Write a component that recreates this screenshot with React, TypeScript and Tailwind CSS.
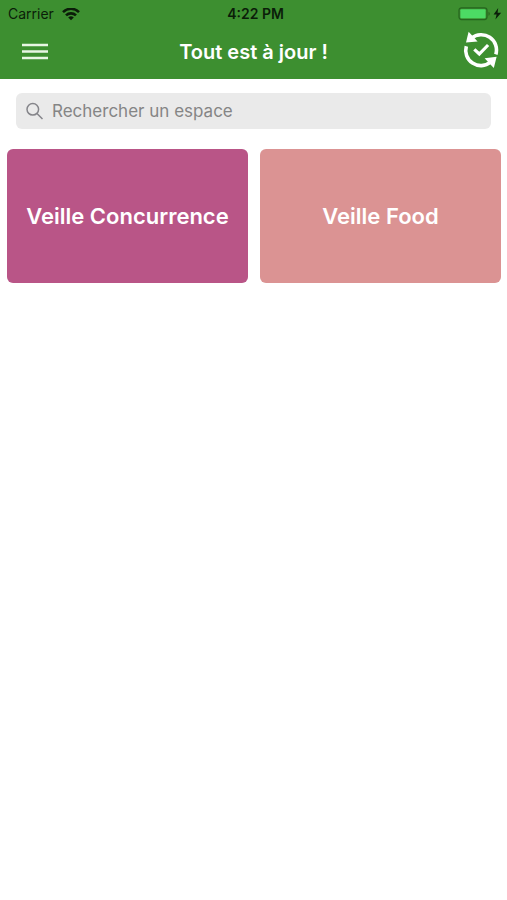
import { useState } from 'react'

const spaces = [
  { name: 'Veille Concurrence', color: 'bg-[#b95587]' },
  { name: 'Veille Food', color: 'bg-[#db9393]' },
]

function WifiIcon() {
  return (
    <svg viewBox="0 0 18 13" className="w-[18px] h-[13px]" fill="none" stroke="#0b1d09" strokeWidth="2.6" aria-hidden="true">
      <path d="M1 4.1a11.4 11.4 0 0 1 16 0" />
      <path d="M4 7.4a7.1 7.1 0 0 1 10 0" />
      <path d="M9 12.3 6.2 9.5a4 4 0 0 1 5.6 0Z" fill="#0b1d09" stroke="none" />
    </svg>
  )
}

function BatteryIcon() {
  return (
    <svg viewBox="0 0 45 14" className="w-[45px] h-3.5" aria-hidden="true">
      <rect x="1" y="0.8" width="28" height="11.8" rx="2.5" fill="none" stroke="#26651f" strokeWidth="1.2" />
      <rect x="2.4" y="2.2" width="25.2" height="9" rx="1" fill="#4cdb64" />
      <path d="M30.5 4.7a2.2 2.2 0 0 1 0 4Z" fill="#26651f" />
      <path d="M40.2 1 35.6 7.6h3L37.4 12.6 43.2 5.7h-3.6Z" fill="#0b1d09" />
    </svg>
  )
}

function MenuIcon() {
  return (
    <svg viewBox="0 0 26 17" className="w-[26px] h-[17px]" stroke="#e8f6e4" strokeWidth="2.5" aria-hidden="true">
      <path d="M0 2.1h26M0 8.5h26M0 14.9h26" />
    </svg>
  )
}

function SyncIcon() {
  return (
    <svg viewBox="0 0 36 38" className="w-9 h-[38px]" fill="none" stroke="white" strokeWidth="3.6" aria-hidden="true">
      <path d="M3.3 15.2A15.2 15.2 0 0 0 27.5 31.2" />
      <path d="M8.6 7.2A15.2 15.2 0 0 1 32.8 23.4" />
      <path d="M5.6.8 3 11.6 14.6 10.6Z" fill="white" stroke="none" />
      <path d="M21.6 27.2 33.6 25.8 30.8 37Z" fill="white" stroke="none" />
      <path d="m11.3 18.3 5 4.7 8.8-9" strokeWidth="3.2" />
    </svg>
  )
}

export default function App() {
  const [query, setQuery] = useState('')
  const visible = spaces.filter((s) => s.name.toLowerCase().includes(query.toLowerCase()))

  return (
    <div className="min-h-screen bg-white font-[Inter,'Liberation_Sans',sans-serif]">
      <header className="bg-[#3d8f30]">
        <div className="grid grid-cols-3 items-center h-7 pl-2 pr-1 text-sm text-[#0b1d09]">
          <div className="flex items-center gap-2">
            <span>Carrier</span>
            <WifiIcon />
          </div>
          <span className="text-center font-semibold">4:22 PM</span>
          <div className="flex justify-end">
            <BatteryIcon />
          </div>
        </div>
        <div className="grid grid-cols-[1fr_auto_1fr] items-center h-[51px] px-2 pb-1">
          <button type="button" aria-label="Menu" className="justify-self-start px-3.5 py-2">
            <MenuIcon />
          </button>
          <h1 className="text-xl font-semibold text-white">Tout est à jour !</h1>
          <button type="button" aria-label="Synchroniser" className="justify-self-end pb-1">
            <SyncIcon />
          </button>
        </div>
      </header>

      <main>
        <div className="px-4 pt-3.5 pb-5">
          <label className="flex items-center gap-2 h-9 px-2.5 rounded-md bg-[#eaeaea]">
            <svg viewBox="0 0 18 18" className="w-[18px] h-[18px]" fill="none" stroke="#85858a" strokeWidth="1.5" aria-hidden="true">
              <circle cx="6.8" cy="7.3" r="5.8" />
              <path d="m11 11.5 5.5 5.5" />
            </svg>
            <input
              type="search"
              aria-label="Rechercher un espace"
              placeholder="Rechercher un espace"
              value={query}
              onChange={(e) => setQuery(e.target.value)}
              className="flex-1 min-w-0 h-full bg-transparent text-[17px] text-gray-800 placeholder:text-[#858585] outline-none"
            />
          </label>
        </div>

        <div className="grid grid-cols-2 gap-3 pl-[7px] pr-1.5">
          {visible.map((s) => (
            <button
              key={s.name}
              type="button"
              className={`h-[134px] rounded-md text-[22px] font-semibold text-white ${s.color}`}
            >
              {s.name}
            </button>
          ))}
        </div>
      </main>
    </div>
  )
}
